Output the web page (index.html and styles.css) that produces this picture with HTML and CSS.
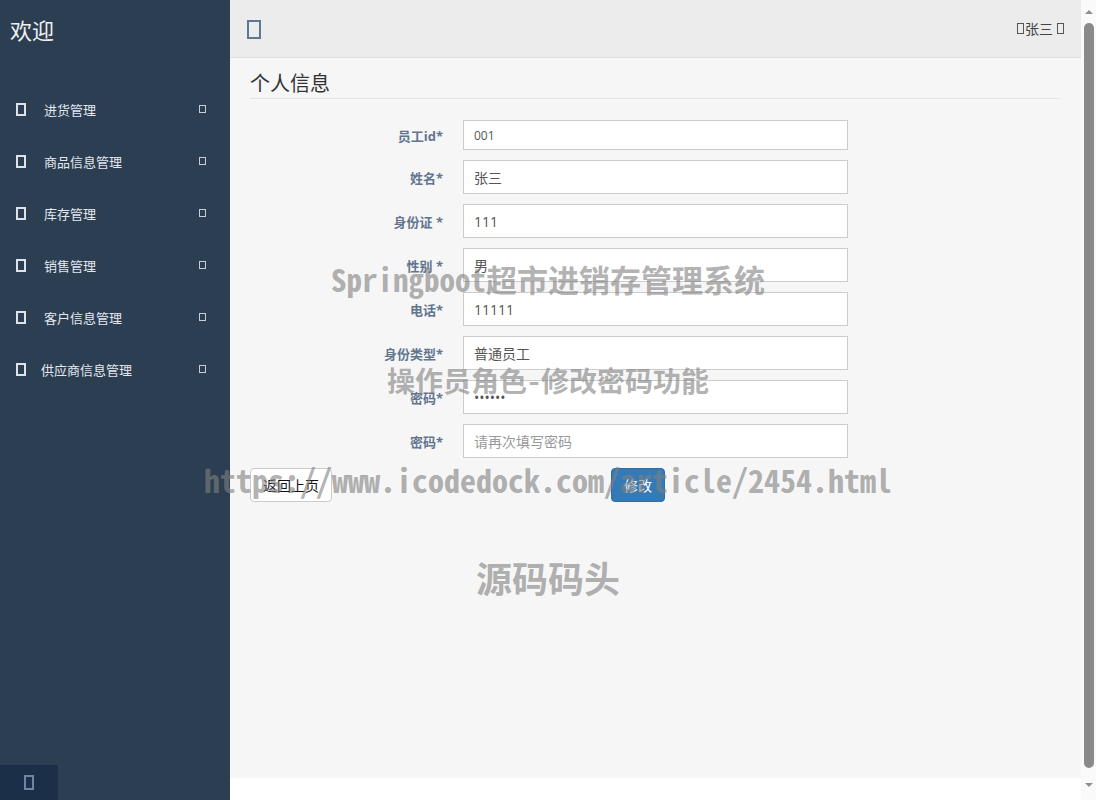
FILE: index.html
```html
<!DOCTYPE html>
<html lang="zh-CN">
<head>
<meta charset="utf-8">
<title>个人信息</title>
<link rel="stylesheet" href="styles.css">
</head>
<body>
<div class="app">
  <aside class="sidebar">
    <div class="brand">欢迎</div>
    <ul class="menu">
      <li class="menu-item"><span class="mi-icon"></span><span class="mi-text">进货管理</span><span class="mi-arrow"></span></li>
      <li class="menu-item"><span class="mi-icon"></span><span class="mi-text">商品信息管理</span><span class="mi-arrow"></span></li>
      <li class="menu-item"><span class="mi-icon"></span><span class="mi-text">库存管理</span><span class="mi-arrow"></span></li>
      <li class="menu-item"><span class="mi-icon"></span><span class="mi-text">销售管理</span><span class="mi-arrow"></span></li>
      <li class="menu-item"><span class="mi-icon"></span><span class="mi-text">客户信息管理</span><span class="mi-arrow"></span></li>
      <li class="menu-item menu-item-wide"><span class="mi-icon"></span><span class="mi-text">供应商信息管理</span><span class="mi-arrow"></span></li>
    </ul>
    <div class="sidebar-foot"><span class="foot-btn"><span class="foot-icon"></span></span></div>
  </aside>
  <main class="main">
    <header class="topbar">
      <span class="toggle-icon"></span>
      <div class="user"><span class="tofu"></span>张三 <span class="tofu"></span></div>
    </header>
    <section class="content">
      <h2 class="page-title">个人信息</h2>
      <form class="form">
        <div class="row"><label class="lbl">员工id*</label><input class="inp inp-sm" value="001"></div>
        <div class="row"><label class="lbl">姓名*</label><input class="inp" value="张三"></div>
        <div class="row"><label class="lbl">身份证 *</label><input class="inp" value="111"></div>
        <div class="row"><label class="lbl">性别 *</label><input class="inp" value="男"></div>
        <div class="row"><label class="lbl">电话*</label><input class="inp" value="11111"></div>
        <div class="row"><label class="lbl">身份类型*</label><input class="inp" value="普通员工"></div>
        <div class="row"><label class="lbl">密码*</label><input class="inp" type="password" value="111111"></div>
        <div class="row"><label class="lbl">密码*</label><input class="inp" type="password" placeholder="请再次填写密码"></div>
        <div class="actions">
          <button type="button" class="btn btn-back">返回上页</button>
          <button type="button" class="btn btn-primary">修改</button>
        </div>
      </form>
    </section>
  </main>
  <div class="scrollbar">
    <span class="sb-up"></span>
    <span class="sb-thumb"></span>
    <span class="sb-down"></span>
  </div>
  <div class="watermarks">
    <div class="wm wm1">Springboot超市进销存管理系统</div>
    <div class="wm wm2">操作员角色-修改密码功能</div>
    <div class="wm wm3">https://www.icodedock.com/article/2454.html</div>
    <div class="wm wm4">源码码头</div>
  </div>
</div>
</body>
</html>
```
FILE: styles.css
```css
html, body { margin: 0; padding: 0; height: 100%; }
body {
  font-family: "Open Sans", "Noto Sans CJK SC", sans-serif;
  background: #fff;
  color: #333;
}
.app {
  position: relative;
  display: flex;
  height: 100vh;
  overflow: hidden;
}
.sidebar {
  width: 230px;
  flex: none;
  background: #2c3e52;
  display: flex;
  flex-direction: column;
  color: #e6e9ee;
}
.brand {
  height: 58px;
  line-height: 58px;
  padding-left: 10px;
  font-size: 22px;
  color: #f0f0f0;
  font-family: "Noto Sans CJK SC", sans-serif;
}
.menu {
  list-style: none;
  margin: 25px 0 0;
  padding: 0;
}
.menu-item {
  height: 52px;
  display: flex;
  align-items: center;
  padding-left: 16px;
  font-size: 13px;
  font-family: "Noto Sans CJK SC", sans-serif;
  color: #e3e7ee;
}
.mi-icon {
  width: 6px;
  height: 9px;
  border: 2px solid #dfe3e9;
  flex: none;
}
.mi-text { margin-left: 18px; width: 155px; }
.menu-item-wide .mi-text { margin-left: 15px; width: 158px; }
.mi-arrow {
  width: 5px;
  height: 6px;
  border: 1px solid #c9ced6;
  flex: none;
}
.sidebar-foot { margin-top: auto; height: 35px; }
.foot-btn {
  display: flex;
  width: 58px;
  height: 35px;
  background: #1b2f48;
  align-items: center;
  justify-content: center;
}
.foot-icon {
  width: 6px;
  height: 11px;
  border: 2px solid #6d86a2;
}
.main {
  flex: 1;
  background: #fff;
  display: flex;
  flex-direction: column;
}
.topbar {
  height: 57px;
  flex: none;
  border-bottom: 1px solid #dcdcdc;
  background: #ececec;
  display: flex;
  align-items: center;
  justify-content: space-between;
  padding: 0 16px 0 17px;
}
.toggle-icon {
  width: 10px;
  height: 15px;
  border: 2px solid #5d7893;
  margin-top: 1px;
}
.user {
  font-size: 14px;
  color: #444;
  font-family: "Noto Sans CJK SC", sans-serif;
  display: flex;
  align-items: center;
  margin-top: -1px;
}
.tofu {
  display: inline-block;
  width: 5px;
  height: 9px;
  border: 1px solid #555;
  margin: 0 1px;
}
.user .tofu:last-child { margin-left: 4px; }
.content {
  background: #f6f6f6;
  height: 710px;
  flex: none;
  padding: 10px 21px 0 20px;
}
.page-title {
  margin: 0;
  font-weight: normal;
  font-size: 20px;
  line-height: 30px;
  height: 30px;
  color: #333;
  border-bottom: 1px solid #e3e3e3;
  font-family: "Noto Sans CJK SC", sans-serif;
}
.form { margin-top: 21px; }
.row {
  display: flex;
  align-items: center;
  margin-bottom: 10px;
}
.lbl {
  width: 193px;
  margin-right: 20px;
  text-align: right;
  font-size: 13px;
  font-weight: bold;
  color: #617590;
}
.inp {
  box-sizing: border-box;
  width: 385px;
  height: 34px;
  border: 1px solid #ccc;
  background: #fff;
  padding: 0 10px;
  font-family: "Open Sans", "Noto Sans CJK SC", sans-serif;
  font-size: 14px;
  color: #555;
  outline: none;
}
.inp-sm { height: 30px; font-size: 12px; }
.inp::placeholder { color: #999; }
.actions {
  display: flex;
  align-items: flex-start;
}
.btn {
  height: 34px;
  font-size: 14px;
  font-family: "Noto Sans CJK SC", sans-serif;
  border-radius: 4px;
  cursor: pointer;
}
.btn-back {
  width: 82px;
  background: #fff;
  border: 1px solid #ccc;
  color: #111;
  padding: 0;
}
.btn-primary {
  margin-left: 279px;
  width: 54px;
  background: #337ab7;
  border: 1px solid #2e6da4;
  color: #fff;
  padding: 0;
}
.scrollbar {
  width: 15px;
  flex: none;
  background: #fafafa;
  display: flex;
  flex-direction: column;
  align-items: center;
}
.sb-up {
  margin-top: 10px;
  width: 0;
  height: 0;
  border-left: 4.5px solid transparent;
  border-right: 4.5px solid transparent;
  border-bottom: 4px solid #8f8f8f;
}
.sb-thumb {
  margin-top: 9px;
  width: 10px;
  height: 745px;
  border-radius: 5px;
  background: #8a8a8a;
}
.sb-down {
  margin-top: 15px;
  width: 0;
  height: 0;
  border-left: 4.5px solid transparent;
  border-right: 4.5px solid transparent;
  border-top: 4px solid #8f8f8f;
}
.watermarks {
  position: absolute;
  left: 0;
  top: 0;
  width: 1096px;
  pointer-events: none;
  text-align: center;
}
.wm {
  position: absolute;
  left: 0;
  right: 0;
  font-family: "Noto Sans Mono CJK SC", "Noto Sans CJK SC", monospace;
  font-weight: bold;
  color: rgba(128, 128, 128, 0.62);
  line-height: 1;
  white-space: nowrap;
}
.wm1 { top: 263px; font-size: 31px; }
.wm2 { top: 366px; font-size: 28px; }
.wm3 { top: 463px; font-size: 32px; }
.wm4 { top: 559px; font-size: 36px; }
```
